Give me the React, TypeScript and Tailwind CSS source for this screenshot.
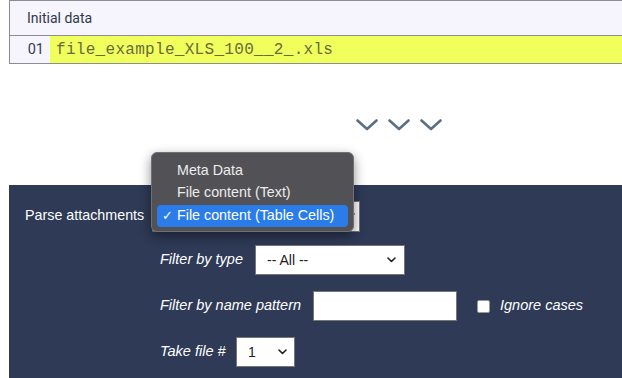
import React from "react";

const Chevron = () => (
  <svg width="22" height="12" viewBox="0 0 22 12" fill="none">
    <path d="M1.5 1.5 L11 10 L20.5 1.5" stroke="#5a6e84" strokeWidth="2.6" strokeLinecap="round" strokeLinejoin="round" />
  </svg>
);

const SmallCaret = () => (
  <svg width="9" height="6" viewBox="0 0 9 6" fill="none">
    <path d="M1 1 L4.5 4.5 L8 1" stroke="#222" strokeWidth="1.6" strokeLinecap="round" strokeLinejoin="round" />
  </svg>
);

export default function App() {
  const sans = { fontFamily: '"Liberation Sans", Arial, sans-serif' };
  return (
    <div className="w-[622px] h-[378px] bg-white relative overflow-hidden flex flex-col" style={sans}>
      {/* Top data panel */}
      <div className="ml-[9px] border-t border-l border-b border-[#8c8c93] bg-[#f6f4fd]">
        <div
          className="h-[35px] flex items-center pl-[17px] text-[14px] text-[#2f3947] border-b border-[#8c8c93]"
          style={{ fontFamily: "Roboto, sans-serif" }}
        >
          Initial data
        </div>
        <div className="h-[27px] flex">
          <div
            className="w-[40px] flex items-center justify-end pr-[6px] text-[14.5px] text-[#35404f]"
            style={{ fontFamily: "Roboto, sans-serif" }}
          >
            01
          </div>
          <div
            className="flex-1 bg-[#f0ff5c] flex items-center pl-[6px] text-[16px] tracking-[0.3px] text-[#6a6a40]"
            style={{ fontFamily: '"Liberation Mono", "Courier New", monospace' }}
          >
            file_example_XLS_100__2_.xls
          </div>
        </div>
      </div>

      {/* Chevrons */}
      <div className="h-[121px] flex items-start pt-[55px] pl-[356px] gap-[10px]">
        <Chevron />
        <Chevron />
        <Chevron />
      </div>

      {/* Dark panel */}
      <div className="ml-[9px] flex-1 bg-[#2e3a56] text-white pt-[15px]">
        <div className="flex items-center h-[32px]">
          <div className="pl-[16px] text-[14.3px] w-[143px]">Parse attachments</div>
          <div className="w-[208px] h-[31px] bg-white border border-[#767676] flex items-center justify-end pr-[4px]">
            <SmallCaret />
          </div>
        </div>

        <div className="flex items-center h-[30px] mt-[13px] pl-[151px]">
          <div className="italic text-[14.5px] w-[95px]">Filter by type</div>
          <div className="w-[150px] h-[30px] bg-white border border-[#767676] flex items-center justify-between pl-[11px] pr-[8px] text-[14px] text-[#222]">
            <span>-- All --</span>
            <SmallCaret />
          </div>
        </div>

        <div className="flex items-center h-[30px] mt-[16px] pl-[151px]">
          <div className="italic text-[14.5px] w-[153px]">Filter by name pattern</div>
          <div className="w-[144px] h-[30px] bg-white border border-[#767676]" />
          <div className="ml-[20px] w-[13px] h-[13px] bg-white rounded-[2px] border border-[#999]" />
          <div className="ml-[10px] italic text-[14.5px]">Ignore cases</div>
        </div>

        <div className="flex items-center h-[30px] mt-[16px] pl-[151px]">
          <div className="italic text-[14.5px] w-[76px]">Take file #</div>
          <div className="w-[59px] h-[30px] bg-white border border-[#767676] flex items-center justify-between pl-[11px] pr-[7px] text-[14px] text-[#222]">
            <span>1</span>
            <SmallCaret />
          </div>
        </div>
      </div>

      {/* Open dropdown popup */}
      <div className="absolute left-[151px] top-[152px] w-[203px] h-[80px] rounded-[6px] bg-[#525256] border border-[#707074] shadow-[0_4px_12px_rgba(0,0,0,0.45)] pt-[7px] px-[5px] text-[14.3px]">
        <div className="h-[22px] flex items-center pl-[20px] text-[#ececec]">Meta Data</div>
        <div className="h-[22px] flex items-center pl-[20px] text-[#ececec]">File content (Text)</div>
        <div className="h-[22px] mt-[1px] flex items-center rounded-[4px] bg-[#2a7de8] text-white">
          <span className="w-[20px] pl-[5px] text-[13px]">✓</span>
          <span>File content (Table Cells)</span>
        </div>
      </div>
    </div>
  );
}
